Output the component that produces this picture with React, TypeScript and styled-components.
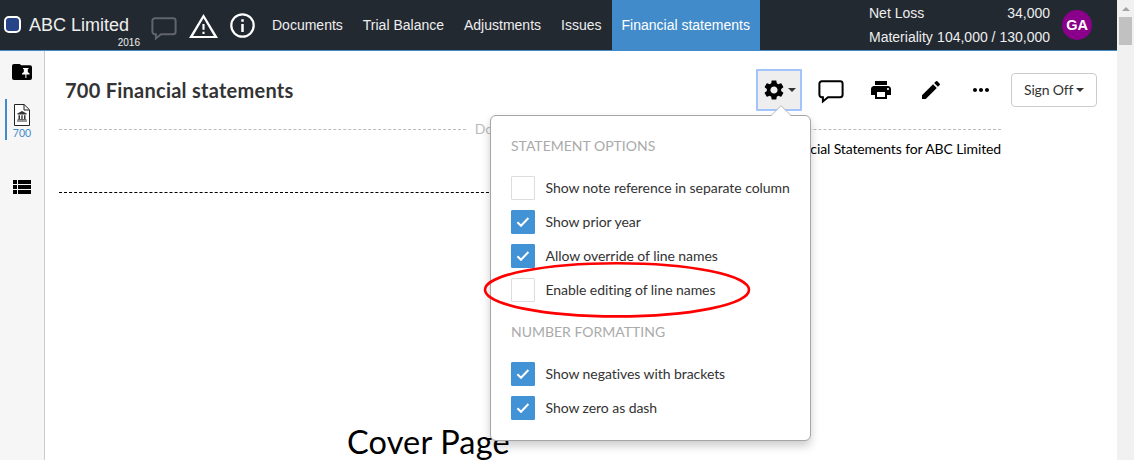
import React from "react";
import styled, { createGlobalStyle } from "styled-components";
import { MdPrint, MdEdit, MdSettings, MdMoreHoriz, MdViewList } from "react-icons/md";

const GlobalStyle = createGlobalStyle`
  * { box-sizing: border-box; }
  body { margin: 0; background: #fff; overflow: hidden; font-family: Lato, sans-serif; font-size: 14px; color: #333; font-variant-ligatures: none; }
  svg { display: block; flex: none; }
`;

const Window = styled.div`
  display: flex;
  width: 1134px;
  height: 460px;
  overflow: hidden;
  position: relative;
`;
const Main = styled.div`
  display: flex;
  flex-direction: column;
  width: 1117px;
`;
const TopBar = styled.header`
  display: flex;
  height: 51px;
  flex: none;
  background: #232931;
  border-bottom: 1px solid #428bca;
  font-family: "Liberation Sans", Arial, sans-serif;
  font-size: 14px;
  color: #eee;
`;
const Brand = styled.div`
  display: flex;
  width: 151px;
  padding: 16px 0 0 4px;
  gap: 8px;
`;
const Logo = styled.div`
  width: 17px;
  height: 17px;
  flex: none;
  border: 2px solid #fff;
  border-radius: 5px;
  background: #274488;
`;
const Company = styled.div`
  width: 111px;
  font-size: 18px;
  line-height: 18px;
  white-space: nowrap;
`;
const Year = styled.div`
  padding-top: 3px;
  text-align: right;
  font-size: 10px;
  line-height: 12px;
`;
const StatusIcons = styled.div`
  display: flex;
  width: 111px;
  align-items: flex-start;
`;
const IconSlot = styled.div<{ $left: number; $top: number }>`
  padding-left: ${(p) => p.$left}px;
  padding-top: ${(p) => p.$top}px;
`;
const Nav = styled.nav`
  display: flex;
`;
const Tab = styled.a<{ $active?: boolean }>`
  padding: 0 10px;
  height: 50px;
  line-height: 50px;
  white-space: nowrap;
  color: ${(p) => (p.$active ? "#fff" : "#eee")};
  background: ${(p) => (p.$active ? "#428bca" : "transparent")};
`;
const Totals = styled.div`
  width: 181px;
  margin-left: auto;
  padding-top: 1px;
`;
const TotalRow = styled.div`
  display: flex;
  justify-content: space-between;
  line-height: 24px;
  white-space: nowrap;
`;
const Avatar = styled.div`
  width: 30px;
  height: 30px;
  margin: 10px 25px 0 12px;
  border-radius: 50%;
  background: #8b008b;
  color: #fff;
  font-weight: bold;
  font-size: 14.5px;
  line-height: 30px;
  text-align: center;
`;
const Body = styled.div`
  display: flex;
  flex: 1;
  min-height: 0;
`;
const Sidebar = styled.aside`
  display: flex;
  flex-direction: column;
  width: 45px;
  flex: none;
  background: #f6f6f6;
  border-right: 1px solid #ccc;
  padding-top: 13px;
`;
const SideItem = styled.div`
  padding-left: 12px;
  height: 35px;
  color: #000;
`;
const SideDocument = styled.div`
  display: flex;
  flex-direction: column;
  align-items: center;
  margin-left: 5px;
  width: 32px;
  height: 41px;
  padding-top: 5px;
  border-left: 2px solid #428bca;
  color: #428bca;
  font-size: 10.5px;
  line-height: 15px;
`;
const SideList = styled.div`
  padding: 35px 0 0 10px;
  color: #000;
`;
const Content = styled.main`
  flex: 1;
  min-width: 0;
`;
const PageHeader = styled.div`
  display: flex;
  align-items: flex-start;
  height: 70px;
  padding: 18px 20px 0 20px;
`;
const Title = styled.h1`
  margin: 9px auto 0 0;
  font-size: 20px;
  line-height: 24px;
  letter-spacing: 0.25px;
  font-weight: bold;
  color: #333;
  white-space: nowrap;
`;
const GearButton = styled.div`
  display: flex;
  align-items: center;
  width: 46px;
  height: 42px;
  padding: 0 0 0 4px;
  gap: 2px;
  border: 2px solid #a3c4fb;
  border-radius: 1px;
  background: #eee;
  color: #000;
`;
const Caret = styled.i`
  width: 0;
  height: 0;
  border: 4px solid transparent;
  border-top-color: #333;
  border-bottom: 0;
`;
const ToolIcon = styled.div<{ $gap: number; $top?: number }>`
  margin-left: ${(p) => p.$gap}px;
  padding-top: ${(p) => p.$top ?? 9}px;
  color: #000;
`;
const SignOff = styled.button`
  display: flex;
  align-items: center;
  gap: 3px;
  width: 86px;
  height: 34px;
  margin: 4px 0 0 18px;
  padding: 0 0 1px 12px;
  border: 1px solid #ccc;
  border-radius: 4px;
  background: #fff;
  font-family: Lato, sans-serif;
  font-size: 14px;
  letter-spacing: -0.15px;
  color: #333;
  white-space: nowrap;
`;
const Sheet = styled.div`
  width: 942px;
  margin-left: 14px;
  color: #000;
`;
const HeaderRule = styled.div`
  display: flex;
  align-items: center;
  gap: 9px;
  height: 17px;
  color: #bbb;
  line-height: 15px;
  letter-spacing: -0.2px;
  white-space: nowrap;
  &::before, &::after {
    content: "";
    flex: 1;
    border-top: 1px dashed #bbb;
  }
`;
const HeaderLabel = styled.span`
  padding-bottom: 2px;
`;
const RunningHead = styled.div`
  height: 54px;
  padding-top: 1px;
  text-align: right;
  line-height: 20px;
  letter-spacing: -0.12px;
`;
const SectionRule = styled.div`
  width: 440px;
  border-top: 1px dashed #000;
`;
const CoverTitle = styled.div`
  padding: 229px 0 0 288px;
  font-size: 32.5px;
  line-height: 40px;
  letter-spacing: 0.15px;
  white-space: nowrap;
`;
const Scrollbar = styled.div`
  display: flex;
  flex-direction: column;
  align-items: center;
  width: 17px;
  background: #f1f1f1;
  padding-top: 7px;
`;
const ScrollArrow = styled.i`
  border: 4px solid transparent;
  border-top: 0;
  border-bottom-color: #a3a3a3;
`;
const Thumb = styled.div`
  width: 13px;
  height: 28px;
  margin-top: 6px;
  background: #c1c1c1;
`;
const Popover = styled.div`
  position: absolute;
  left: 490px;
  top: 115px;
  width: 321px;
  height: 326px;
  padding: 20px;
  border: 1px solid #a5a5a5;
  border-radius: 6px;
  background: #fff;
  box-shadow: 0 5px 10px rgba(0, 0, 0, 0.2);
`;
const Pointer = styled.svg`
  position: absolute;
  left: 280px;
  top: -11px;
`;
const GroupTitle = styled.div`
  height: 40px;
  line-height: 20px;
  color: #aaa;
  white-space: nowrap;
`;
const Group = styled.div`
  display: flex;
  flex-direction: column;
  gap: 10px;
  margin-bottom: 20px;
`;
const Option = styled.label`
  display: flex;
  align-items: center;
  gap: 10.5px;
  height: 24px;
  line-height: 22px;
  letter-spacing: -0.06px;
  white-space: nowrap;
`;
const Box = styled.span<{ $on: boolean }>`
  display: flex;
  align-items: center;
  justify-content: center;
  width: 24px;
  height: 24px;
  flex: none;
  border-radius: 1px;
  border: 1px solid ${(p) => (p.$on ? "#4292d6" : "#ddd")};
  background: ${(p) => (p.$on ? "#4292d6" : "#fff")};
`;
const Highlight = styled.svg`
  position: absolute;
  left: 480px;
  top: 256px;
`;

const Bubble = ({ color }: { color: string }) => (
  <svg width="26" height="24" viewBox="0 0 26 24" fill="none" stroke={color} strokeWidth="2">
    <path d="M3.8 1.3H22.2a2.4 2.4 0 0 1 2.4 2.4V14.8a2.4 2.4 0 0 1-2.4 2.4H10L4.9 21.4V17.2H3.8A2.4 2.4 0 0 1 1.4 14.8V3.7A2.4 2.4 0 0 1 3.8 1.3Z" />
  </svg>
);

const Check = ({ label, on = false }: { label: string; on?: boolean }) => (
  <Option>
    <Box $on={on}>
      {on && (
        <svg width="14" height="12" viewBox="0 0 14 12" fill="none" stroke="#fff" strokeWidth="2">
          <path d="M1.4 6.2L5 9.8L12.4 2" />
        </svg>
      )}
    </Box>
    <span>{label}</span>
  </Option>
);

export default function App() {
  return (
    <Window>
      <GlobalStyle />
      <Main>
        <TopBar>
          <Brand>
            <Logo />
            <Company>
              ABC Limited
              <Year>2016</Year>
            </Company>
          </Brand>
          <StatusIcons>
            <IconSlot $left={0} $top={17}><Bubble color="#61656b" /></IconSlot>
            <IconSlot $left={12} $top={14}>
              <svg width="29" height="24" viewBox="1 2 22 19" preserveAspectRatio="none" fill="#fff">
                <path d="M12 5.3L19.9 19.4H4.1L12 5.3M12 2L1 21h22L12 2zm.8 14h-1.6v1.8h1.6V16zm0-6h-1.6v4.5h1.6V10z" />
              </svg>
            </IconSlot>
            <IconSlot $left={12} $top={13}>
              <svg width="25" height="25" viewBox="0 0 25 25" fill="none" stroke="#fff" strokeWidth="2.2">
                <circle cx="12.5" cy="12.5" r="11.2" />
                <path d="M12.5 11V19M12.5 6.3V8.8" strokeWidth="2.5" />
              </svg>
            </IconSlot>
          </StatusIcons>
          <Nav>
            <Tab>Documents</Tab>
            <Tab>Trial Balance</Tab>
            <Tab>Adjustments</Tab>
            <Tab>Issues</Tab>
            <Tab $active>Financial statements</Tab>
          </Nav>
          <Totals>
            <TotalRow><span>Net Loss</span><span>34,000</span></TotalRow>
            <TotalRow><span>Materiality</span><span>104,000 / 130,000</span></TotalRow>
          </Totals>
          <Avatar>GA</Avatar>
        </TopBar>
        <Body>
          <Sidebar>
            <SideItem>
              <svg width="20" height="16" viewBox="0 0 20 16">
                <path fill="#000" d="M2 0H7.6L9.4 1.2H18A2 2 0 0 1 20 3.2V14A2 2 0 0 1 18 16H2A2 2 0 0 1 0 14V2A2 2 0 0 1 2 0Z" />
                <path fill="#fff" d="M11 4H16.6V5H15.8V8L17.6 9.6V10.6H14.4V14H13.4V10.6H10V9.6L11.8 8V5H11Z" />
              </svg>
            </SideItem>
            <SideDocument>
              <svg width="16" height="22" viewBox="0 0 16 22" fill="none" stroke="#222" strokeWidth="1">
                <path d="M.5.5H10.2L15.5 5.8V21.5H.5Z M10 .8V6H15.2" fill="#fff" />
                <path d="M8 7L12.6 9.4V10.4H3.4V9.4Z M4.5 11.2H6V15H4.5Z M7.3 11.2H8.7V15H7.3Z M10 11.2H11.5V15H10Z M3.6 15.3H12.4V16H3.6Z M3 16.6H13V17.5H3Z" fill="#333" stroke="none" />
              </svg>
              700
            </SideDocument>
            <SideList><MdViewList size={24} /></SideList>
          </Sidebar>
          <Content>
            <PageHeader>
              <Title>700 Financial statements</Title>
              <GearButton>
                <MdSettings size={24} />
                <Caret />
              </GearButton>
              <ToolIcon $gap={16} $top={11}><Bubble color="#000" /></ToolIcon>
              <ToolIcon $gap={25}><MdPrint size={24} /></ToolIcon>
              <ToolIcon $gap={26}><MdEdit size={24} /></ToolIcon>
              <ToolIcon $gap={26}><MdMoreHoriz size={24} /></ToolIcon>
              <SignOff>Sign Off<Caret /></SignOff>
            </PageHeader>
            <Sheet>
              <HeaderRule><HeaderLabel>Document Header</HeaderLabel></HeaderRule>
              <RunningHead>Financial Statements for ABC Limited</RunningHead>
              <SectionRule />
              <CoverTitle>Cover Page</CoverTitle>
            </Sheet>
          </Content>
        </Body>
      </Main>
      <Scrollbar>
        <ScrollArrow />
        <Thumb />
      </Scrollbar>
      <Popover>
        <Pointer width="20" height="12" viewBox="0 0 20 12">
          <path d="M0 11L10 1L20 11V12H0Z" fill="#fff" />
          <path d="M0 10.5L10 .7L20 10.5" fill="none" stroke="#bbb" />
        </Pointer>
        <GroupTitle>STATEMENT OPTIONS</GroupTitle>
        <Group>
          <Check label="Show note reference in separate column" />
          <Check label="Show prior year" on />
          <Check label="Allow override of line names" on />
          <Check label="Enable editing of line names" />
        </Group>
        <GroupTitle>NUMBER FORMATTING</GroupTitle>
        <Group>
          <Check label="Show negatives with brackets" on />
          <Check label="Show zero as dash" on />
        </Group>
      </Popover>
      <Highlight width="274" height="68" viewBox="0 0 274 68">
        <ellipse cx="137" cy="33.8" rx="132" ry="26.6" fill="none" stroke="#f00" strokeWidth="2.6" />
      </Highlight>
    </Window>
  );
}
